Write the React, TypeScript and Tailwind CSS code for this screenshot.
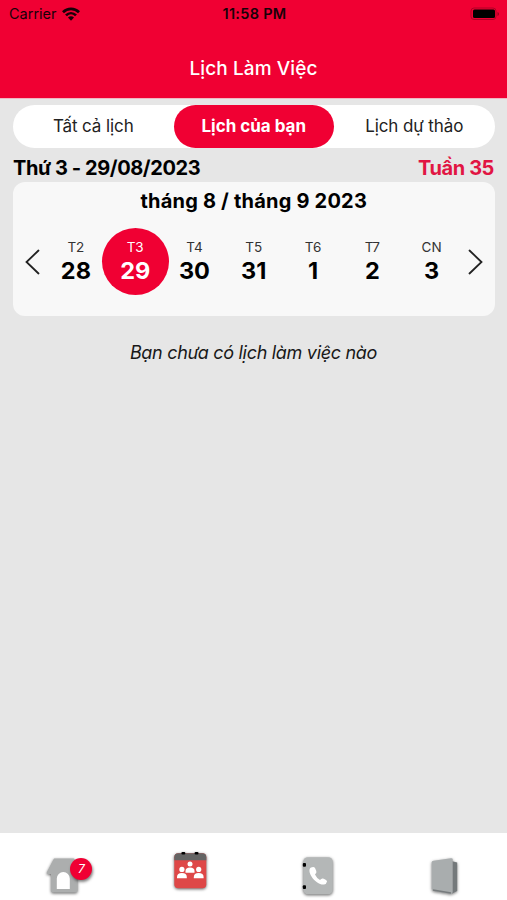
interface Day {
  label: string
  date: number
}

const tabs = [
  { id: "all", label: "Tất cả lịch", style: "text-[17px] tracking-[-0.1px]" },
  { id: "mine", label: "Lịch của bạn", style: "text-[17px] font-bold" },
  { id: "draft", label: "Lịch dự thảo", style: "text-[17px] tracking-[-0.1px]" },
]

const days: Day[] = [
  { label: "T2", date: 28 },
  { label: "T3", date: 29 },
  { label: "T4", date: 30 },
  { label: "T5", date: 31 },
  { label: "T6", date: 1 },
  { label: "T7", date: 2 },
  { label: "CN", date: 3 },
]

const activeTab = "mine"
const selectedDate = 29

function WifiIcon() {
  return (
    <svg width="18" height="14" viewBox="0 0 18 14" fill="none" stroke="#180008" strokeWidth="2.7">
      <path d="M1 5.2C5.5 .8 12.5 .8 17 5.2" />
      <path d="M4 8.4C6.9 5.5 11.1 5.5 14 8.4" />
      <path d="M6 10.6C7.7 8.9 10.3 8.9 12 10.6L9 13.7Z" fill="#180008" stroke="none" />
    </svg>
  )
}

function BatteryIcon() {
  return (
    <svg width="30" height="14" viewBox="0 0 30 14">
      <rect x="1" y="1" width="25" height="11.5" rx="3" fill="none" stroke="#b00026" />
      <rect x="3" y="2.5" width="22" height="8.5" rx="1.5" fill="#000" />
      <path d="M27.5 5v4q1.5-.6 1.5-2t-1.5-2" fill="#980020" />
    </svg>
  )
}

function HomeIcon() {
  return (
    <svg width="44" height="44" viewBox="0 0 44 44" className="drop-shadow-[0_1px_1.5px_rgba(0,0,0,0.6)]">
      <path
        d="M13 4.5H33L40 16V19H36.500V36.500Q36.500 38.500 34.500 38.500H12Q10 38.500 10 36.500V20H6.500Q5 19.500 6 18Z"
        fill="#acaeae"
      />
      <path d="M15.800 35V24.500a6.500 6.500 0 0 1 13 0V35Z" fill="#fff" />
    </svg>
  )
}

function MeetingIcon() {
  return (
    <svg width="44" height="44" viewBox="0 0 44 44" className="drop-shadow-[0_1px_1.5px_rgba(0,0,0,0.6)]">
      <rect x="6.3" y="4.3" width="32" height="35" rx="4" fill="#de4747" />
      <path d="M6.3 11.300V8.300Q6.300 4.300 10.300 4.300H34.300Q38.300 4.300 38.300 8.300V11.300Z" fill="#646464" />
      <path d="M14.600 4.300h1.500M27.800 4.300h1.500" stroke="#000" strokeWidth="2.5" strokeLinecap="round" />
      <g fill="#fff">
        <circle cx="22" cy="15" r="2.5" />
        <path d="M17.500 23.700v-1.700q0-3.500 4.500-3.500t4.500 3.500v1.700Z" />
        <circle cx="13.9" cy="20.4" r="2.6" />
        <path d="M9 29.300V28q0-4 4.900-4t4.900 4v1.300Z" />
        <circle cx="30.700" cy="20.4" r="2.6" />
        <path d="M25.800 29.300V28q0-4 4.900-4t4.900 4v1.300Z" />
      </g>
    </svg>
  )
}

function ContactsIcon() {
  return (
    <svg width="44" height="44" viewBox="0 0 44 44" className="drop-shadow-[0_1px_1.5px_rgba(0,0,0,0.6)]">
      <rect x="8.300" y="3.300" width="29.500" height="37" rx="4.5" fill="#b4b7b7" />
      <rect x="7.800" y="9" width="3.200" height="3.800" rx="1" fill="#000" />
      <rect x="7.800" y="31.200" width="3.200" height="3.800" rx="1" fill="#000" />
      <path
        d="M16 13.5C13.800 14.500 14 18.500 16.500 22.500C19.500 27.500 25 31 29 30.500Q31.500 30 32 27.500Q32 26 28 24.500Q26.500 24 25 26Q21.500 24 20 20.500Q22 18.500 21.300 17L20 14Q19 12.500 16 13.500Z"
        fill="#fff"
      />
    </svg>
  )
}

function DirectoryIcon() {
  return (
    <svg width="44" height="44" viewBox="0 0 44 44" className="drop-shadow-[0_1px_1.5px_rgba(0,0,0,0.5)]">
      <path d="M29 7L35.200 8.500V37L30 39.500Z" fill="#74797b" />
      <path
        d="M9.700 8.500Q9.700 7 11.500 6.700L29 4.200Q30.700 4 30.700 5.500V38Q30.700 40 28.700 39.700L11.700 37Q9.700 36.500 9.700 34.500Z"
        fill="#a9adae"
      />
      <path d="M11 36L29 39" stroke="#777b7d" strokeWidth="1.3" />
    </svg>
  )
}

function Arrow({ direction }: { direction: "left" | "right" }) {
  return (
    <svg width="16" height="26" viewBox="0 0 16 26" fill="none" stroke="#222" strokeWidth="1.8" strokeLinecap="round">
      <path d={direction === "left" ? "M14.5 1.5L2.5 13L14.5 24.5" : "M1.5 1.5L13.5 13L1.5 24.5"} />
    </svg>
  )
}

export default function App() {
  return (
    <div className="flex h-[900px] w-[507px] flex-col overflow-hidden bg-[#e6e6e6] font-['Inter',sans-serif] text-black">
      {/* Header */}
      <header className="h-[98px] shrink-0 bg-[#f00033] shadow-[0_1px_0_#efb7c2]">
        <div className="grid h-7 grid-cols-3 items-center pl-[9px] pr-[7px] text-[#180008]">
          <div className="flex items-center gap-[5px]">
            <span className="text-[14.5px]">Carrier</span>
            <WifiIcon />
          </div>
          <span className="text-center text-[14.5px] font-semibold tracking-[0.3px]">11:58 PM</span>
          <div className="flex justify-end">
            <BatteryIcon />
          </div>
        </div>
        <h1 className="mt-[27px] text-center text-[19px] leading-7 font-medium tracking-[0.1px] text-white">Lịch Làm Việc</h1>
      </header>

      <main className="flex flex-1 flex-col px-[13px] pt-[7px]">
        <div className="grid h-[43px] w-[481.5px] grid-cols-3 rounded-full bg-white">
          {tabs.map((tab) => (
            <button
              key={tab.id}
              className={`rounded-full ${tab.style} ${tab.id === activeTab ? "bg-[#f00033] text-white" : "text-[#222]"}`}
            >
              {tab.label}
            </button>
          ))}
        </div>

        <div className="flex h-[34px] items-center justify-between pt-[6px] text-[20px] font-bold tracking-[-0.42px]">
          <span>Thứ 3 - 29/08/2023</span>
          <span className="text-[#e11543]">Tuần 35</span>
        </div>

        {/* Week picker */}
        <section className="h-[134px] w-[481.5px] rounded-[12px] bg-[#f8f8f8]">
          <h2 className="pt-[5px] text-center text-[20px] leading-7 font-bold tracking-[0.2px]">tháng 8 / tháng 9 2023</h2>
          <div className="mt-[13px] flex items-center justify-between px-[11px]">
            <Arrow direction="left" />
            <div className="grid w-[415px] shrink-0 grid-cols-7">
              {days.map((day) => (
                <div key={day.label} className="flex justify-center">
                  <div
                    className={`flex size-[67px] shrink-0 flex-col items-center rounded-full pt-[10px] ${
                      day.date === selectedDate ? "bg-[#f00033] text-white" : ""
                    }`}
                  >
                    <span className={`text-[13.5px] leading-[18px] ${day.date === selectedDate ? "" : "text-[#333]"}`}>
                      {day.label}
                    </span>
                    <span className="text-[23.5px] leading-[29px] font-bold">{day.date}</span>
                  </div>
                </div>
              ))}
            </div>
            <Arrow direction="right" />
          </div>
        </section>

        <p className="mt-[23px] text-center text-[18px] leading-7 tracking-[-0.3px] text-[#181818] italic">
          Bạn chưa có lịch làm việc nào
        </p>
      </main>

      {/* Bottom navigation */}
      <nav className="grid h-[67px] shrink-0 grid-cols-4 bg-white pt-[16px]">
        <div className="flex justify-center pt-[5px]">
          <div className="relative">
            <HomeIcon />
            <span className="absolute top-[4px] left-[29px] flex size-[22px] items-center justify-center rounded-full bg-[#f00033] text-[12px] text-white italic shadow-[1px_2px_3px_rgba(0,0,0,0.5)]">
              7
            </span>
          </div>
        </div>
        <div className="flex justify-center">
          <MeetingIcon />
        </div>
        <div className="flex justify-center pt-[5px]">
          <ContactsIcon />
        </div>
        <div className="flex justify-center pt-[5px]">
          <DirectoryIcon />
        </div>
      </nav>
    </div>
  )
}
